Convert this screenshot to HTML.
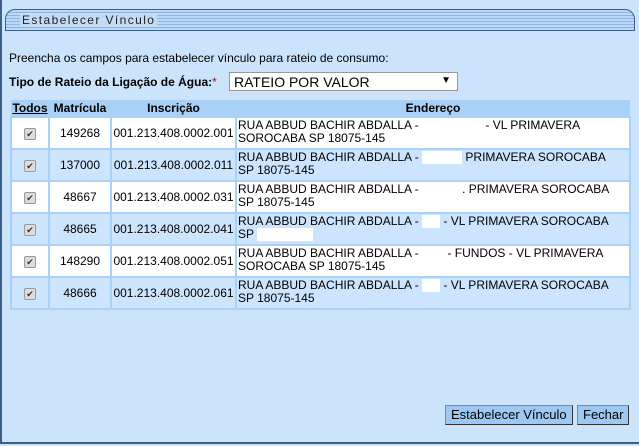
<!DOCTYPE html>
<html><head><meta charset="utf-8"><style>
*{margin:0;padding:0;box-sizing:border-box}
body{width:639px;height:446px;background:#cbe3fb;font-family:"Liberation Sans",Arial,sans-serif;font-size:12px;color:#000;position:relative;overflow:hidden}
.frame{position:absolute;left:0;top:0;width:639px;height:444px;border-left:2px solid #3a5f8a;border-bottom:2px solid #3a5f8a}
.title{position:absolute;left:5px;top:9px;width:630px;height:22px;border:1px solid #3a5f8a;border-radius:10px 10px 0 0;background:repeating-linear-gradient(#bcd8f5 0,#bcd8f5 2px,#8fb6e3 2px,#8fb6e3 3px)}
.title span{position:absolute;left:14px;top:3px;font-size:12px;letter-spacing:1.4px;color:#222;background:#c3dcf6;padding:0 2px}
.t1{position:absolute;left:9px;top:51px}
.t2{position:absolute;left:9px;top:75px;font-weight:bold}
.t2 i{color:#c00;font-style:normal;font-weight:normal}
.sel{position:absolute;left:229px;top:72px;width:229px;height:19px;background:#fff;border:1px solid #999;font-size:14px;padding:1px 4px}
.sel b{position:absolute;right:6px;top:2px;font-size:10px}
table{position:absolute;left:10px;top:100px;width:621px;border-collapse:collapse}
th{background:#a9d0f5;height:17px;font-weight:bold;font-size:12px;text-align:center;padding:0}
th u{font-weight:bold}
td{border:2px solid #a9d0f5;height:32px;font-size:12px;text-align:center;padding:0;vertical-align:middle}
td.e{text-align:left;padding-left:1px;line-height:13px;vertical-align:top;padding-top:1px}
tr.a td{background:#fff}
tr.b td{background:#cce4fd}
.cb{display:inline-block;width:12px;height:12px;border:1px solid #999;background:#ddd;font-size:9px;line-height:10px;color:#333;border-radius:2px}
.w{display:inline-block;background:#fff;height:13px;vertical-align:top}
.btn{position:absolute;top:405px;height:20px;background:#9cc8f3;border:1px solid #6f8fb0;border-right-color:#333;border-bottom-color:#333;font-size:13px;padding:1px 5px}
</style></head><body>
<div class="frame"></div>
<div class="title"><span>Estabelecer Vínculo</span></div>
<div class="t1">Preencha os campos para estabelecer vínculo para rateio de consumo:</div>
<div class="t2">Tipo de Rateio da Ligação de Água:<i>*</i></div>
<div class="sel">RATEIO POR VALOR<b>▼</b></div>
<table>
<tr><th style="width:38px"><u>Todos</u></th><th style="width:62px">Matrícula</th><th style="width:125px">Inscrição</th><th>Endereço</th></tr>
<tr class="a"><td><span class="cb">✔</span></td><td>149268</td><td>001.213.408.0002.001</td><td class="e">RUA ABBUD BACHIR ABDALLA - <span style="display:inline-block;width:60px"></span> - VL PRIMAVERA<br>SOROCABA SP 18075-145</td></tr>
<tr class="b"><td><span class="cb">✔</span></td><td>137000</td><td>001.213.408.0002.011</td><td class="e">RUA ABBUD BACHIR ABDALLA - <span class="w" style="width:40px"></span> PRIMAVERA SOROCABA<br>SP 18075-145</td></tr>
<tr class="a"><td><span class="cb">✔</span></td><td>48667</td><td>001.213.408.0002.031</td><td class="e">RUA ABBUD BACHIR ABDALLA - <span style="display:inline-block;width:40px"></span>. PRIMAVERA SOROCABA<br>SP 18075-145</td></tr>
<tr class="b"><td><span class="cb">✔</span></td><td>48665</td><td>001.213.408.0002.041</td><td class="e">RUA ABBUD BACHIR ABDALLA - <span class="w" style="width:18px"></span> - VL PRIMAVERA SOROCABA<br>SP <span class="w" style="width:56px"></span></td></tr>
<tr class="a"><td><span class="cb">✔</span></td><td>148290</td><td>001.213.408.0002.051</td><td class="e">RUA ABBUD BACHIR ABDALLA - <span style="display:inline-block;width:22px"></span> - FUNDOS - VL PRIMAVERA<br>SOROCABA SP 18075-145</td></tr>
<tr class="b"><td><span class="cb">✔</span></td><td>48666</td><td>001.213.408.0002.061</td><td class="e">RUA ABBUD BACHIR ABDALLA - <span class="w" style="width:18px"></span> - VL PRIMAVERA SOROCABA<br>SP 18075-145</td></tr>
</table>
<div class="btn" style="left:445px">Estabelecer Vínculo</div>
<div class="btn" style="left:577px">Fechar</div>
</body></html>
